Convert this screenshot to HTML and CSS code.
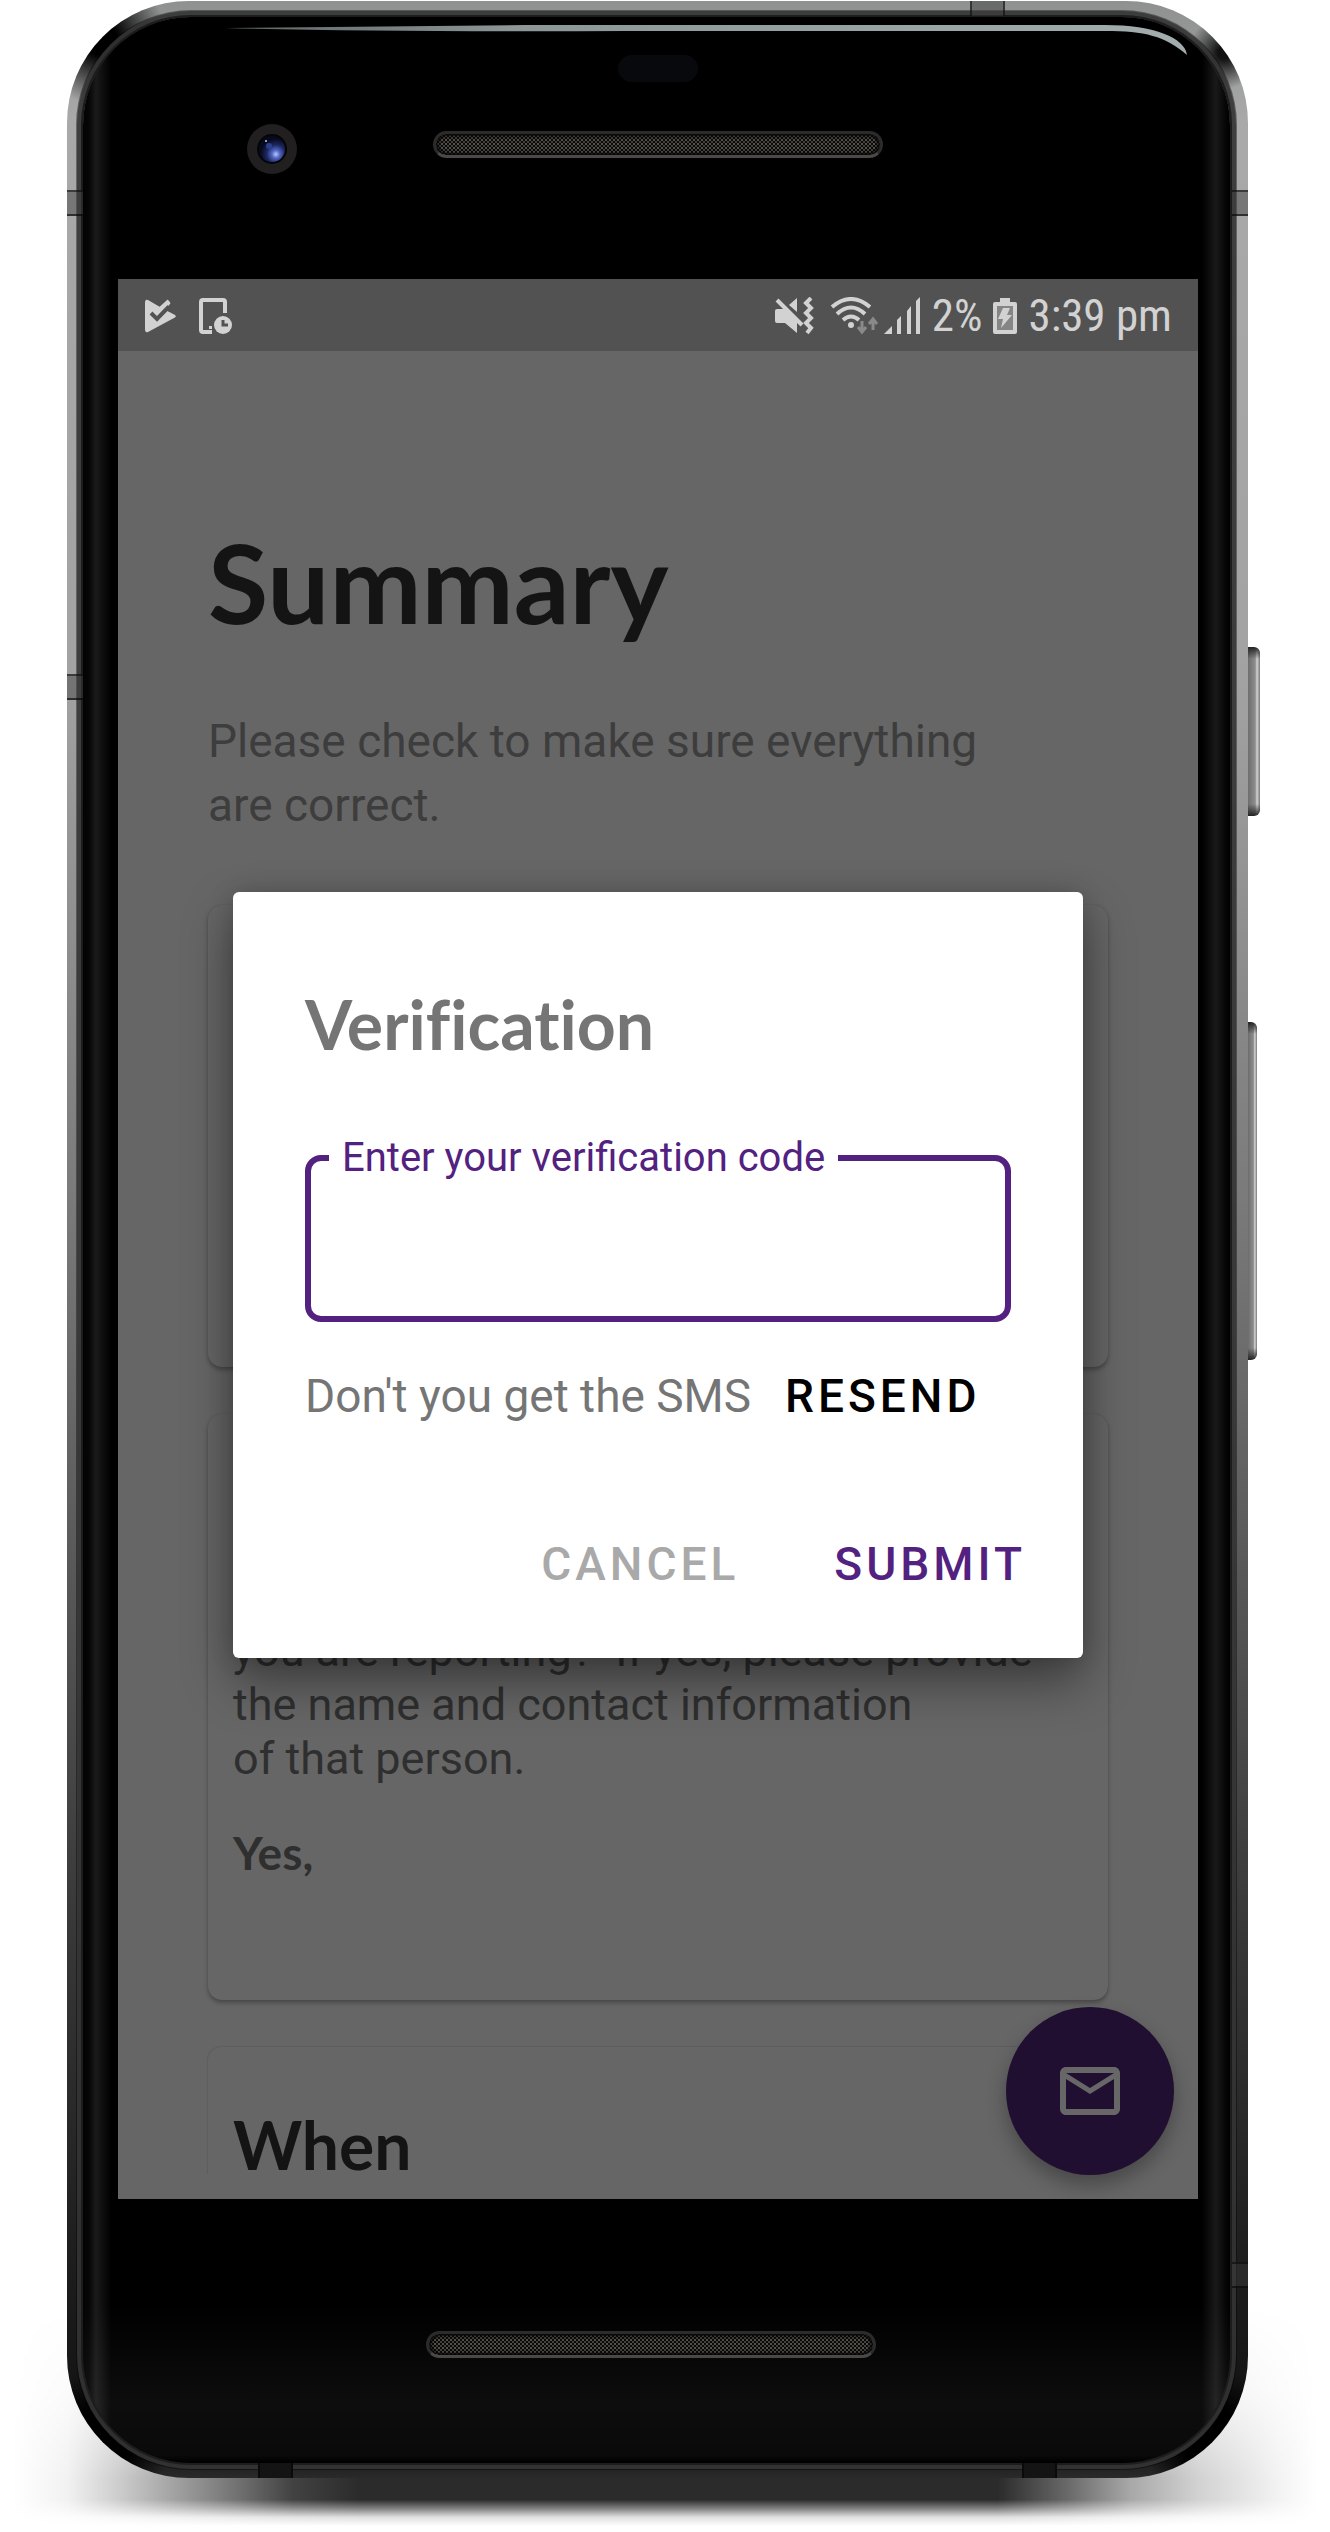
FILE: index.html
```html
<!DOCTYPE html>
<html lang="en">
<head>
<meta charset="utf-8">
<meta name="viewport" content="width=device-width, initial-scale=1">
<title>Verification</title>
<link rel="stylesheet" href="styles.css">
</head>
<body>
<div class="stage">
  <div class="ground-shadow"></div>
  <div class="phone">
    <span class="side-key power"></span>
    <span class="side-key volume"></span>
    <span class="seam side left upper"></span>
    <span class="seam side left middle"></span>
    <span class="seam side right upper"></span>
    <span class="seam side right lower"></span>
    <span class="seam edge top"></span>
    <span class="seam edge bottom-left"></span>
    <span class="seam edge bottom-right"></span>
    <div class="bezel">
      <div class="forehead">
        <svg class="glint" viewBox="0 0 980 60" preserveAspectRatio="none" aria-hidden="true">
          <defs><linearGradient id="glint" x1="0" x2="1"><stop offset="0" stop-color="#5c6666"/><stop offset=".3" stop-color="#8c9696"/><stop offset="1" stop-color="#a3adad"/></linearGradient></defs>
          <path d="M0 4 L300 1 H880 C930 1 960 14 962 31 C940 12 920 7 880 7 H400 Q150 8 0 4Z" fill="url(#glint)"/>
        </svg>
        <span class="sensor"></span>
        <div class="forehead-row">
          <svg class="camera" viewBox="0 0 52 52" aria-hidden="true">
            <defs><radialGradient id="lens" cx=".65" cy=".7" r=".6"><stop offset="0" stop-color="#b9c8ff"/><stop offset=".25" stop-color="#5468c4"/><stop offset=".6" stop-color="#1c2760"/><stop offset="1" stop-color="#07091c"/></radialGradient></defs>
            <circle cx="26" cy="26" r="25" fill="#221f20"/>
            <circle cx="26" cy="26" r="15" fill="#050507"/>
            <circle cx="26" cy="26" r="13" fill="url(#lens)"/>
            <circle cx="23" cy="23" r="3" fill="#2c3f8c"/>
            <circle cx="20" cy="18" r="1" fill="#c4ccec"/>
          </svg>
          <span class="speaker"></span>
        </div>
      </div>

      <div class="screen">
        <header class="status-bar">
          <div class="status-group notices">
            <svg width="32" height="36" viewBox="0 0 32 36" aria-hidden="true">
              <path d="M1 5Q1 1 4 2L16 9L31 17Q33 19 30 20L4 34Q1 35 1 31Z" fill="#d2d2d2"/>
              <path d="M16 9L26 14L31 11L25 1Z" fill="#525252"/>
              <path d="M7 15L12 20L25 4" fill="none" stroke="#d2d2d2" stroke-width="4"/>
              <path d="M6 16L12 22L24 9.500" fill="none" stroke="#525252" stroke-width="4" transform="translate(1 -1)"/>
              <path d="M15 12L25 3" stroke="#d2d2d2" stroke-width="4"/>
              <path d="M9 11L14 14" stroke="#d2d2d2" stroke-width="3"/>
            </svg>
            <svg width="34" height="36" viewBox="0 0 34 36" aria-hidden="true">
              <path d="M26 15V4Q26 2 24 2H4Q2 2 2 4V32Q2 34 4 34H13" fill="none" stroke="#d2d2d2" stroke-width="4"/>
              <rect x="10" y="28" width="3" height="3" fill="#d2d2d2"/>
              <circle cx="24" cy="27" r="9" fill="#d2d2d2"/>
              <path d="M24 22V27H29" fill="none" stroke="#525252" stroke-width="3"/>
            </svg>
          </div>
          <div class="status-group system">
            <svg width="40" height="38" viewBox="0 0 40 38" aria-hidden="true">
              <path d="M1 14Q1 12 3 12H11L23 24V36L11 26H3Q1 26 1 24Z" fill="#d2d2d2"/>
              <path d="M15 8L23 1V15Z" fill="#d2d2d2"/>
              <path d="M3 3L28 28" stroke="#d2d2d2" stroke-width="4"/>
              <path d="M37 1L32 6L37 11L32 16L37 21L32 26L37 31L33 36" fill="none" stroke="#d2d2d2" stroke-width="4"/>
            </svg>
            <span class="status-group network">
              <svg width="50" height="38" viewBox="0 0 50 38" aria-hidden="true">
                <g fill="none" stroke="#d2d2d2" stroke-width="4">
                  <path d="M2 10Q21 -6 40 10"/><path d="M7 17Q21 4 35 17"/><path d="M13 23Q21 16 29 23"/>
                </g>
                <circle cx="21" cy="28" r="3" fill="#d2d2d2"/>
                <path d="M32 24V34M28 30L32 35L36 30M43 33V23M39 27L43 22L47 27" fill="none" stroke="#8a8a8a" stroke-width="3"/>
              </svg>
              <svg width="37" height="38" viewBox="0 0 37 38" aria-hidden="true">
                <path d="M0 37L8 29V37ZM13 23L17 19V37H13ZM23 14L27 9V37H23ZM32 4L36 0V37H32Z" fill="#d2d2d2"/>
              </svg>
            </span>
            <span>2%</span>
            <svg width="24" height="36" viewBox="0 0 24 36" aria-hidden="true">
              <path d="M7 0H17V4H22Q24 4 24 6V34Q24 36 22 36H2Q0 36 0 34V6Q0 4 2 4H7Z" fill="#d2d2d2"/>
              <rect x="4" y="8" width="16" height="24" fill="#858585"/>
              <path d="M10 10H17L14 17H19L8 30L10 21H5Z" fill="#d2d2d2"/>
            </svg>
            <time>3:39 pm</time>
          </div>
        </header>

        <div class="viewport">
          <main class="summary">
            <h1>Summary</h1>
            <p class="intro">Please check to make sure everything<br>are correct.</p>
            <section class="card blank"></section>
            <section class="card answer">
              <p>you are reporting?&nbsp; If yes, please provide<br>the name and contact information<br>of that person.</p>
              <strong>Yes,</strong>
            </section>
            <section class="card partial">
              <h2>When</h2>
            </section>
          </main>

          <button class="fab" type="button" aria-label="Messages">
            <svg width="72" height="72" viewBox="0 0 24 24" aria-hidden="true"><path fill="#676767" d="M22 6c0-1.100-.9-2-2-2H4c-1.100 0-2 .9-2 2v12c0 1.100.9 2 2 2h16c1.100 0 2-.9 2-2V6zm-2 0l-8 5-8-5h16zm0 12H4V8l8 5 8-5v10z"/></svg>
          </button>

          <form class="dialog" role="dialog" aria-labelledby="dialog-title">
            <h2 id="dialog-title">Verification</h2>
            <fieldset class="field">
              <legend><label for="code">Enter your verification code</label></legend>
              <input id="code" type="text" inputmode="numeric" autocomplete="one-time-code">
            </fieldset>
            <div class="resend">
              <span>Don't you get the SMS</span>
              <button class="text-button strong" type="button">RESEND</button>
            </div>
            <div class="actions">
              <button class="text-button muted" type="button">CANCEL</button>
              <button class="text-button accent" type="submit">SUBMIT</button>
            </div>
          </form>
        </div>
      </div>

      <div class="chin"><span class="speaker"></span></div>
    </div>
  </div>
</div>
</body>
</html>
```
FILE: styles.css
```css
* { box-sizing: border-box; }

body {
  margin: 0;
  background: #fff;
  font-family: Roboto, "Liberation Sans", sans-serif;
}

h1, h2, p { margin: 0; }

button {
  border: 0;
  padding: 0;
  background: none;
  font-family: inherit;
  cursor: pointer;
}

.stage {
  position: relative;
  overflow: hidden;
  padding: 1px 82px 54px 67px;
}

/* Shadow on the ground under the handset */
.ground-shadow {
  position: absolute;
  left: 0;
  right: 0;
  bottom: 6px;
  height: 220px;
  background: linear-gradient(to right,
    transparent 1%, rgba(0, 0, 0, .05) 5%, rgba(0, 0, 0, .2) 9%, rgba(0, 0, 0, .4) 14%,
    rgba(0, 0, 0, .56) 18%, rgba(0, 0, 0, .74) 22%, rgba(0, 0, 0, .83) 27%,
    rgba(0, 0, 0, .83) 75%, rgba(0, 0, 0, .6) 80%, rgba(0, 0, 0, .34) 85%,
    rgba(0, 0, 0, .18) 90%, rgba(0, 0, 0, .05) 96%, transparent 99%);
  -webkit-mask-image: linear-gradient(transparent, rgba(0, 0, 0, .3) 40%, #000 78%, #000 88%, rgba(0, 0, 0, .6) 92%, rgba(0, 0, 0, .15) 96%, transparent);
  mask-image: linear-gradient(transparent, rgba(0, 0, 0, .3) 40%, #000 78%, #000 88%, rgba(0, 0, 0, .6) 92%, rgba(0, 0, 0, .15) 96%, transparent);
}

/* Metal body */
.phone {
  position: relative;
  padding: 16px 18px 15px 16px;
  border-radius: 122px;
  background:
    radial-gradient(circle at 34px 38px, #000 16px, transparent 66px),
    radial-gradient(circle at calc(100% - 24px) 52px, #111 6px, transparent 36px),
    radial-gradient(circle at 34px calc(100% - 38px), #000 30px, transparent 70px),
    radial-gradient(circle at calc(100% - 34px) calc(100% - 38px), #000 30px, transparent 70px),
    linear-gradient(#8e9190 0, #a9a9a9 120px, #a2a2a2 680px, #7a7a7a 1200px, #3a3a3a 1900px, #1e1e1e 2250px, #111 2440px, #2a2a2a 100%);
}

.bezel {
  border-radius: 108px;
  padding: 0 32px 0 35px;
  background:
    linear-gradient(transparent calc(100% - 160px), rgba(255, 255, 255, .05) calc(100% - 60px), rgba(255, 255, 255, .04) calc(100% - 8px), transparent),
    linear-gradient(to right, #030303, #060606 6px, #1a1a1a 13px, #000 28px, #000 calc(100% - 28px), #191919 calc(100% - 14px), #050505 calc(100% - 4px), #000);
  box-shadow: 0 0 0 2px #1d1d1d, 0 0 0 6px rgba(55, 55, 55, .85), 0 0 0 7px rgba(0, 0, 0, .4);
}

.forehead {
  position: relative;
  height: 262px;
  padding-top: 38px;
}

.glint {
  position: absolute;
  top: 7px;
  left: 107px;
  width: calc(100% - 100px);
  height: 60px;
}

.sensor {
  display: block;
  width: 80px;
  height: 27px;
  margin: 0 auto;
  border-radius: 14px;
  background: #08090d;
}

.forehead-row {
  display: grid;
  grid-template-columns: 1fr 450px 1fr;
  align-items: start;
  margin-top: 41px;
}

.camera {
  width: 52px;
  height: 52px;
  margin-left: 128px;
}

.speaker {
  display: block;
  width: 450px;
  height: 27px;
  border: 3px solid #2c2b2b;
  border-bottom-color: #4b4845;
  border-radius: 14px;
  background:
    radial-gradient(circle, #55504a 1px, transparent 1px) 0 0 / 4px 4px,
    radial-gradient(circle, #45403a 1px, transparent 1px) 2px 2px / 4px 4px,
    #0a0a0a;
  box-shadow: inset 0 0 3px 2px #060606;
}

.forehead .speaker { margin-top: 8px; }

.chin {
  display: flex;
  justify-content: center;
  height: 264px;
  padding: 132px 14px 0 0;
}

.side-key {
  position: absolute;
  left: 100%;
  border-radius: 0 6px 6px 0;
  background:
    linear-gradient(#222 0, transparent 12px, transparent calc(100% - 12px), #222),
    linear-gradient(to right, #6d6d6d, #8d8d8d 60%, #d4d4d4 75%, #777);
}

.power { top: 646px; width: 12px; height: 169px; }
.volume { top: 1021px; width: 9px; height: 338px; }

.seam {
  position: absolute;
  background: rgba(60, 60, 60, .45);
}

.side {
  width: 16px;
  height: 26px;
  border-top: 2px solid rgba(0, 0, 0, .5);
  border-bottom: 2px solid rgba(0, 0, 0, .6);
}

.left { left: 0; }
.right { right: 0; }
.upper { top: 189px; }
.middle { top: 673px; }
.lower { top: 2261px; }

.edge {
  width: 35px;
  height: 15px;
  border-left: 2px solid rgba(0, 0, 0, .5);
  border-right: 2px solid rgba(0, 0, 0, .5);
}

.top { top: 0; right: 243px; }
.bottom-left { bottom: 0; left: 191px; background: #141414; }
.bottom-right { bottom: 0; right: 191px; background: #141414; }

/* Screen */
.screen { background: #666; }

.status-bar {
  display: flex;
  justify-content: space-between;
  align-items: center;
  height: 72px;
  padding: 2px 26px 0 26px;
  background: #525252;
  color: #d2d2d2;
  font-family: "Roboto Condensed", Roboto, sans-serif;
  font-size: 45px;
  line-height: 54px;
}

.status-group {
  display: flex;
  align-items: center;
}

.notices { gap: 23px; }
.system { gap: 11px; }
.network { gap: 4px; margin-left: 5px; }

/* The dialog and the button share one cell with the page beneath them */
.viewport {
  display: grid;
}

.summary,
.dialog,
.fab { grid-area: 1 / 1; }

.summary {
  padding: 166px 90px 24px;
}

h1, h2, strong {
  font-family: Lato, "Open Sans", sans-serif;
  font-weight: 700;
  font-variant-ligatures: none;
}

h1 {
  color: #141414;
  font-size: 110px;
  line-height: 128px;
}

.intro {
  margin: 64px 0 68px;
  color: #3d3d3d;
  font-size: 46px;
  line-height: 64px;
}

.card {
  padding: 0 25px;
  border-radius: 14px;
  box-shadow: 0 3px 4px rgba(0, 0, 0, .28), 0 0 1px rgba(0, 0, 0, .2);
  color: #2f2f2f;
  font-size: 45px;
  line-height: 54px;
}

.blank { height: 462px; }

.answer {
  margin: 47px 0;
  padding-top: 210px;
  padding-bottom: 120px;
}

.answer p { white-space: nowrap; }

.answer strong {
  display: block;
  margin-top: 40px;
  font-size: 46px;
}

.partial {
  padding-top: 68px;
  border-radius: 14px 14px 0 0;
  box-shadow: -1px -1px 1px rgba(0, 0, 0, .08);
}

.partial h2 {
  color: #141414;
  font-size: 66px;
  line-height: 60px;
}

.fab {
  display: grid;
  place-items: center;
  place-self: end;
  width: 168px;
  height: 168px;
  margin: 0 24px 24px 0;
  border-radius: 50%;
  background: #210f31;
  box-shadow: 0 10px 20px rgba(0, 0, 0, .3);
}

.dialog {
  align-self: center;
  margin: 0 115px;
  padding: 96px 57px 66px 72px;
  border-radius: 6px;
  background: #fff;
  box-shadow: 0 24px 50px rgba(0, 0, 0, .42), 0 0 24px rgba(0, 0, 0, .15);
}

.dialog h2 {
  color: #757575;
  font-size: 68px;
  line-height: 72px;
}

.field {
  min-width: 0;
  margin: 74px 15px 0 0;
  padding: 0 18px;
  border: 6px solid #53217f;
  border-radius: 16px;
}

.field legend {
  padding: 0 13px;
  color: #53217f;
  font-size: 40px;
  line-height: 48px;
}

.field input {
  display: block;
  width: 100%;
  height: 134px;
  border: 0;
  outline: 0;
  padding: 0 14px;
  background: none;
  color: #212121;
  font: 46px Roboto, sans-serif;
}

.resend {
  display: flex;
  gap: 34px;
  margin-top: 46px;
  color: #757575;
  font-size: 46px;
  line-height: 56px;
  white-space: nowrap;
}

.actions {
  display: flex;
  justify-content: flex-end;
  gap: 95px;
  margin-top: 112px;
}

.text-button {
  font-size: 46px;
  font-weight: 500;
  line-height: 56px;
  letter-spacing: 4px;
}

.strong { color: #000; }
.muted { color: #a9a9a9; }
.accent { color: #53217f; }
```
